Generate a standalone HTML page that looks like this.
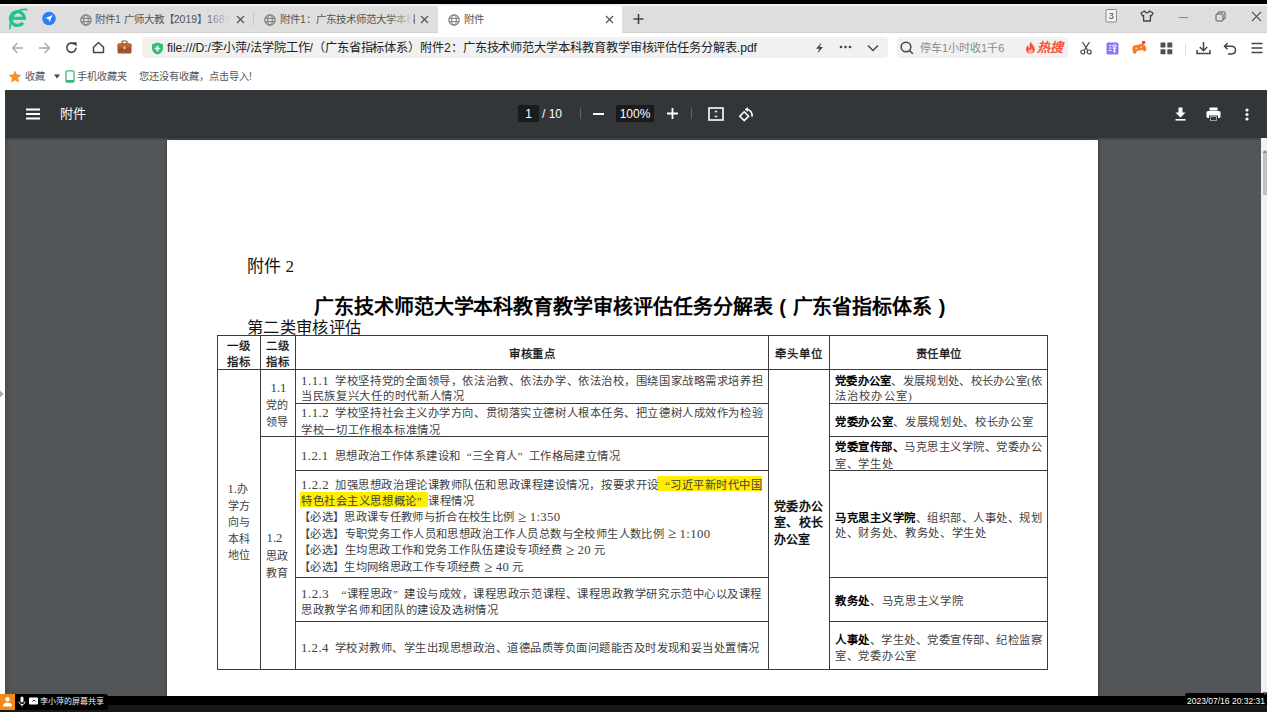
<!DOCTYPE html>
<html lang="zh-CN">
<head>
<meta charset="utf-8">
<style>
*{margin:0;padding:0;box-sizing:border-box}
html,body{width:1267px;height:712px;overflow:hidden;background:#fff;position:relative;font-family:"Liberation Sans",sans-serif}
.a{position:absolute}
.ui{font-family:"Liberation Sans",sans-serif;white-space:nowrap}
.sr{font-family:"Liberation Serif",serif;white-space:nowrap}
.ln{background:#3a3a3a}
.bd{font-family:"Liberation Serif",serif;font-size:11.3px;line-height:16px;color:#404040;white-space:nowrap}
.bd b{color:#000}
.hd{font-family:"Liberation Sans",sans-serif;font-weight:normal;-webkit-text-stroke:0.3px #111;font-size:11.4px;line-height:16px;color:#111;white-space:nowrap}
.hd4{font-family:"Liberation Sans",sans-serif;font-weight:bold;font-size:12px;line-height:16px;color:#111;white-space:nowrap}
.tt{font-family:"Liberation Sans",sans-serif;font-weight:bold;font-size:20px;line-height:24px;color:#000;white-space:nowrap}
.fj{font-family:"Liberation Serif",serif;font-size:17px;line-height:20px;color:#111;white-space:nowrap}
.sub{font-family:"Liberation Sans",sans-serif;font-size:16.3px;line-height:20px;color:#111;white-space:nowrap}
.tab{font-family:"Liberation Sans",sans-serif;font-size:10.5px;line-height:14px;color:#555;white-space:nowrap;overflow:hidden}
.addr{font-family:"Liberation Sans",sans-serif;font-size:12.2px;line-height:16px;color:#222;white-space:nowrap}
.srch{font-family:"Liberation Sans",sans-serif;font-size:11px;line-height:16px;color:#8a8a8a;white-space:nowrap}
.hot{font-family:"Liberation Sans",sans-serif;font-size:13px;line-height:16px;color:#f5553a;font-weight:bold;font-style:italic;white-space:nowrap}
.bm{font-family:"Liberation Sans",sans-serif;font-size:10.2px;line-height:14px;color:#555;white-space:nowrap}
.pt{font-family:"Liberation Sans",sans-serif;font-size:13px;line-height:16px;color:#fff;white-space:nowrap}
.pt2{font-family:"Liberation Sans",sans-serif;font-size:12px;line-height:16px;color:#fff;white-space:nowrap}
.shr{font-family:"Liberation Sans",sans-serif;font-size:8px;line-height:10px;color:#eee;white-space:nowrap}
.ts{font-family:"Liberation Sans",sans-serif;font-size:8.5px;line-height:12px;color:#fff;white-space:nowrap}
.c2{font-size:11px}
.hl{background:#ffee00}
.fw{display:inline-block;width:1em;text-align:center;letter-spacing:0}
.ge{display:inline-block;width:1em;text-align:center;letter-spacing:0;font-size:1.35em;line-height:0;vertical-align:-0.05em}
.lt{font-size:1.13em;line-height:0}
.sp{display:inline-block;width:6px}
.q1{display:inline-block;width:1em;text-align:right;letter-spacing:0}
.q2{display:inline-block;width:1em;text-align:left;letter-spacing:0}
</style>
</head>
<body>
<!-- top black strip -->
<div class="a" style="left:0;top:0;width:1267px;height:4px;background:#000"></div>
<div class="a" style="left:0;top:4px;width:1267px;height:2px;background:#f2f2f2"></div>
<!-- tab bar -->
<div class="a" style="left:0;top:6px;width:1267px;height:26px;background:#dedede"></div>
<div class="a" style="left:0;top:32px;width:1267px;height:1px;background:#d2d2d2"></div>
<!-- active tab -->
<div class="a" style="left:438px;top:6px;width:184px;height:27px;background:#fff"></div>

<!-- address row -->
<div class="a" style="left:0;top:33px;width:1267px;height:55px;background:#fff"></div>
<div class="a" style="left:142px;top:37px;width:746px;height:21px;background:#f1f1f2;border-radius:4px"></div>
<div class="a" style="left:897px;top:37px;width:171px;height:21px;background:#f1f1f2;border-radius:4px"></div>


<!-- logo e -->
<svg class="a" style="left:4px;top:4px" width="26" height="28" viewBox="0 0 26 28">
<path d="M20.35 14.55 A6.9 6.9 0 1 0 18.89 18.80" fill="none" stroke="#20c48c" stroke-width="3.3"/>
<path d="M6.5 14.3 H22" stroke="#20c48c" stroke-width="3.2"/>
<path d="M22.8 5.6 C15 4.6 6.6 9 5.8 24.6" fill="none" stroke="#20c48c" stroke-width="1.7" stroke-linecap="round"/>
</svg>
<!-- blue circle -->
<svg class="a" style="left:42px;top:11px" width="14" height="15" viewBox="0 0 14 15">
<circle cx="7" cy="7.5" r="6.8" fill="#2a7ef0"/>
<path d="M3.2 7.2 L10.6 4 L7.6 11.2 L6.6 8.1 Z" fill="#fff"/>
</svg>
<!-- tab1 -->
<svg class="a gl" style="left:80px;top:14px" width="12" height="12" viewBox="0 0 12 12"><circle cx="6" cy="6" r="5.2" fill="none" stroke="#777" stroke-width="1.1"/><ellipse cx="6" cy="6" rx="2.3" ry="5.2" fill="none" stroke="#777" stroke-width="1"/><path d="M1 4.3H11M1 7.7H11" stroke="#777" stroke-width="1"/></svg>
<div class="a tab" style="left:95px;top:12px;width:135px">附件1 广师大教【2019】168号</div>
<div class="a" style="left:205px;top:8px;width:25px;height:22px;background:linear-gradient(90deg,rgba(222,222,222,0),#dedede)"></div>
<svg class="a" style="left:236px;top:15px" width="9" height="9" viewBox="0 0 9 9"><path d="M1 1L8 8M8 1L1 8" stroke="#555" stroke-width="1.2"/></svg>
<div class="a" style="left:253px;top:13px;width:1px;height:13px;background:#c8c8c8"></div>
<!-- tab2 -->
<svg class="a gl" style="left:264px;top:14px" width="12" height="12" viewBox="0 0 12 12"><circle cx="6" cy="6" r="5.2" fill="none" stroke="#777" stroke-width="1.1"/><ellipse cx="6" cy="6" rx="2.3" ry="5.2" fill="none" stroke="#777" stroke-width="1"/><path d="M1 4.3H11M1 7.7H11" stroke="#777" stroke-width="1"/></svg>
<div class="a tab" style="left:280px;top:12px;width:135px">附件1：广东技术师范大学本科教育</div>
<div class="a" style="left:388px;top:8px;width:25px;height:22px;background:linear-gradient(90deg,rgba(222,222,222,0),#dedede)"></div>
<svg class="a" style="left:420px;top:15px" width="9" height="9" viewBox="0 0 9 9"><path d="M1 1L8 8M8 1L1 8" stroke="#555" stroke-width="1.2"/></svg>
<!-- tab3 active -->
<svg class="a gl" style="left:448px;top:14px" width="12" height="12" viewBox="0 0 12 12"><circle cx="6" cy="6" r="5.2" fill="none" stroke="#777" stroke-width="1.1"/><ellipse cx="6" cy="6" rx="2.3" ry="5.2" fill="none" stroke="#777" stroke-width="1"/><path d="M1 4.3H11M1 7.7H11" stroke="#777" stroke-width="1"/></svg>
<div class="a tab" style="left:464px;top:12px">附件</div>
<svg class="a" style="left:605px;top:15px" width="9" height="9" viewBox="0 0 9 9"><path d="M1 1L8 8M8 1L1 8" stroke="#555" stroke-width="1.2"/></svg>
<svg class="a" style="left:632px;top:13px" width="13" height="12" viewBox="0 0 13 12"><path d="M6.5 1V11M1.5 6H11.5" stroke="#444" stroke-width="1.6"/></svg>
<!-- window controls -->
<svg class="a" style="left:1105px;top:8px" width="13" height="15" viewBox="0 0 13 15"><rect x="1" y="1.5" width="10.5" height="12.5" rx="1" fill="#f2f2f2" stroke="#888" stroke-width="1"/><text x="6.3" y="11.3" font-family="Liberation Sans" font-size="9" text-anchor="middle" fill="#444">3</text></svg>
<svg class="a" style="left:1140px;top:10px" width="14" height="12" viewBox="0 0 14 12"><path d="M4.5 1 L1 3 L2.4 5.8 L3.6 5.3 V11 H10.4 V5.3 L11.6 5.8 L13 3 L9.5 1 C9 2.2 8 2.8 7 2.8 C6 2.8 5 2.2 4.5 1 Z" fill="none" stroke="#444" stroke-width="1.3" stroke-linejoin="round"/></svg>
<div class="a" style="left:1179px;top:17px;width:9px;height:1px;background:#888"></div>
<svg class="a" style="left:1215px;top:11px" width="11" height="11" viewBox="0 0 11 11"><rect x="1" y="3" width="7" height="7" rx="1" fill="none" stroke="#555" stroke-width="1"/><path d="M3 3V1.5C3 1.2 3.2 1 3.5 1H9.5C9.8 1 10 1.2 10 1.5V7.5C10 7.8 9.8 8 9.5 8H8" fill="none" stroke="#555" stroke-width="1"/></svg>
<svg class="a" style="left:1251px;top:11px" width="11" height="11" viewBox="0 0 11 11"><path d="M1 1L10 10M10 1L1 10" stroke="#555" stroke-width="1.1"/></svg>

<!-- nav buttons -->
<svg class="a" style="left:11px;top:42px" width="13" height="12" viewBox="0 0 13 12"><path d="M12 6H1.5M6.5 1L1.5 6L6.5 11" fill="none" stroke="#a8a8a8" stroke-width="1.3"/></svg>
<svg class="a" style="left:38px;top:42px" width="13" height="12" viewBox="0 0 13 12"><path d="M1 6H11.5M6.5 1L11.5 6L6.5 11" fill="none" stroke="#a8a8a8" stroke-width="1.3"/></svg>
<svg class="a" style="left:65px;top:41px" width="13" height="13" viewBox="0 0 13 13"><path d="M11 6.8A4.6 4.6 0 1 1 9.6 3.4" fill="none" stroke="#444" stroke-width="1.6"/><path d="M7.2 1.2H11.6V5.6Z" fill="#444"/></svg>
<svg class="a" style="left:92px;top:41px" width="13" height="13" viewBox="0 0 13 13"><path d="M1.5 6.2L6.5 1.5L11.5 6.2V11.6H1.5Z" fill="none" stroke="#444" stroke-width="1.5" stroke-linejoin="round"/></svg>
<svg class="a" style="left:117px;top:40px" width="15" height="14" viewBox="0 0 15 14"><rect x="5" y="1" width="5" height="3" rx="1" fill="none" stroke="#8b4a22" stroke-width="1.2"/><rect x="0.5" y="3.5" width="14" height="10" rx="1.5" fill="#a0522d"/><rect x="0.5" y="3.5" width="14" height="4" rx="1.5" fill="#b8652f"/><rect x="6.5" y="6.5" width="2" height="2.5" fill="#f2d08a"/></svg>
<!-- address -->
<svg class="a" style="left:151px;top:42px" width="13" height="13" viewBox="0 0 13 13"><path d="M6.5 0.5L12 2.3V6.5C12 9.5 9.8 11.6 6.5 12.6C3.2 11.6 1 9.5 1 6.5V2.3Z" fill="#3cba7a"/><path d="M6.5 3.8V9.2M3.8 6.5H9.2" stroke="#fff" stroke-width="1.6"/></svg>
<div class="a addr j" style="left:167px;top:40px;width:590px">file:///D:/李小萍/法学院工作/（广东省指标体系）附件2：广东技术师范大学本科教育教学审核评估任务分解表.pdf</div>
<svg class="a" style="left:814px;top:42px" width="11" height="12" viewBox="0 0 11 12"><path d="M7.5 0.5L2 6.8H5.3L3.5 11.5L9 5H5.8Z" fill="#444"/></svg>
<svg class="a" style="left:839px;top:45px" width="13" height="4" viewBox="0 0 13 4"><circle cx="2" cy="2" r="1.3" fill="#444"/><circle cx="6.5" cy="2" r="1.3" fill="#444"/><circle cx="11" cy="2" r="1.3" fill="#444"/></svg>
<svg class="a" style="left:867px;top:44px" width="12" height="8" viewBox="0 0 12 8"><path d="M1 1.5L6 6.5L11 1.5" fill="none" stroke="#444" stroke-width="1.4"/></svg>
<!-- search -->
<svg class="a" style="left:900px;top:41px" width="14" height="14" viewBox="0 0 14 14"><circle cx="6" cy="6" r="4.8" fill="none" stroke="#444" stroke-width="1.5"/><path d="M9.5 9.5L12.8 12.8" stroke="#444" stroke-width="1.6"/></svg>
<div class="a srch" style="left:920px;top:40px">停车1小时收1千6</div>
<svg class="a" style="left:1025px;top:41px" width="11" height="13" viewBox="0 0 11 13"><path d="M5.5 0.5C6.5 3 9.5 4.5 9.8 8C10 10.8 8 12.5 5.5 12.5C2.8 12.5 1 10.6 1 8.2C1 6.3 2 5 3 4.3C3 5.8 3.6 6.8 4.5 7.2C4.3 4.8 4.8 2.3 5.5 0.5Z" fill="#f5553a"/><path d="M5.5 12.3C4.2 12.3 3.3 11.3 3.3 10.1C3.3 9 4 8.4 4.6 7.9C4.7 8.8 5.2 9.3 5.8 9.4C5.9 8.6 6.3 7.9 6.9 7.3C7.4 8.3 7.8 9.2 7.7 10.2C7.6 11.4 6.7 12.3 5.5 12.3Z" fill="#fff" opacity="0.6"/></svg>
<div class="a hot" style="left:1037px;top:40px">热搜</div>
<!-- right toolbar icons -->
<svg class="a" style="left:1079px;top:41px" width="14" height="14" viewBox="0 0 14 14"><path d="M3.5 1L8.8 9.5M10.5 1L5.2 9.5" stroke="#444" stroke-width="1.2"/><circle cx="3.8" cy="11" r="2" fill="none" stroke="#444" stroke-width="1.2"/><circle cx="10.2" cy="11" r="2" fill="none" stroke="#444" stroke-width="1.2"/></svg>
<svg class="a" style="left:1106px;top:42px" width="13" height="13" viewBox="0 0 13 13"><rect x="0.5" y="0.5" width="12" height="12" rx="1.5" fill="#8a76f4"/><path d="M3 3.5H5.5M3 6H5.5M3 8.5H5.5M7 3H10V5H7ZM6.8 6.5H10.2M8.5 5V11M7 9H10" stroke="#fff" stroke-width="0.9" fill="none"/></svg>
<svg class="a" style="left:1131px;top:40px" width="16" height="14" viewBox="0 0 16 14"><g transform="rotate(-14 8 8)"><path d="M4 4.5H11C13.2 4.5 14.6 6.5 14.9 9.2C15.1 11.2 14.4 12.6 13.1 12.6C12 12.6 11.3 11.4 10.6 10.5H5.4C4.7 11.4 4 12.6 2.9 12.6C1.6 12.6 0.9 11.2 1.1 9.2C1.4 6.5 2 4.5 4 4.5Z" fill="#fb7a1c"/><circle cx="5.3" cy="7.8" r="0.9" fill="#ffd9b8"/><circle cx="10.4" cy="7.8" r="0.9" fill="#ffd9b8"/></g><circle cx="12.6" cy="2.4" r="1.7" fill="#ea3b2e"/></svg>
<svg class="a" style="left:1160px;top:42px" width="13" height="13" viewBox="0 0 13 13"><rect x="0.5" y="0.5" width="5" height="5" rx="0.6" fill="#505050"/><rect x="7.3" y="0.5" width="5" height="5" rx="0.6" fill="#505050"/><rect x="0.5" y="7.3" width="5" height="5" rx="0.6" fill="#505050"/><rect x="7.3" y="7.3" width="5" height="5" rx="0.6" fill="#505050"/></svg>
<div class="a" style="left:1185px;top:44px;width:1px;height:12px;background:#ddd"></div>
<svg class="a" style="left:1196px;top:41px" width="15" height="14" viewBox="0 0 15 14"><path d="M7.5 1V9.5M3.8 6L7.5 9.7L11.2 6M1 9V12.6H14V9" fill="none" stroke="#444" stroke-width="1.5"/></svg>
<svg class="a" style="left:1223px;top:42px" width="14" height="13" viewBox="0 0 14 13"><path d="M4.5 1.2L1.5 4.2L4.5 7.2M1.8 4.2H8.5C10.8 4.2 12.5 6 12.5 8.1C12.5 10.3 10.8 12 8.5 12H5" fill="none" stroke="#444" stroke-width="1.5"/></svg>
<svg class="a" style="left:1251px;top:42px" width="12" height="12" viewBox="0 0 12 12"><path d="M0.5 1.5H11.5M0.5 6H11.5M0.5 10.5H11.5" stroke="#444" stroke-width="1.5"/></svg>

<!-- bookmarks -->
<svg class="a" style="left:8px;top:70px" width="14" height="13" viewBox="0 0 14 13"><path d="M7 0.5L8.9 4.6L13.4 5L10 8L11 12.5L7 10.2L3 12.5L4 8L0.6 5L5.1 4.6Z" fill="#f7901e"/></svg>
<div class="a bm" style="left:25px;top:70px">收藏</div>
<svg class="a" style="left:54px;top:74px" width="6" height="5" viewBox="0 0 6 5"><path d="M0 0.5H6L3 4.5Z" fill="#444"/></svg>
<svg class="a" style="left:65px;top:70px" width="10" height="13" viewBox="0 0 10 13"><rect x="1" y="0.8" width="8" height="11.4" rx="1.2" fill="none" stroke="#3cb878" stroke-width="1.3"/><rect x="1" y="10" width="8" height="2.2" fill="#3cb878"/></svg>
<div class="a bm" style="left:77px;top:70px">手机收藏夹</div>
<div class="a bm" style="left:139px;top:70px">您还没有收藏，点击导入!</div>

<!-- pdf viewer -->
<div class="a" style="left:5px;top:90px;width:1262px;height:48px;background:#323639"></div>
<div class="a" style="left:5px;top:138px;width:1256px;height:558px;background:#525659"></div>
<div class="a" style="left:1261px;top:138px;width:6px;height:558px;background:#f1f1f1"></div>
<div class="a" style="left:1263px;top:151px;width:4px;height:44px;background:#c1c1c1"></div>

<!-- pdf toolbar -->
<svg class="a" style="left:26px;top:108px" width="14" height="12" viewBox="0 0 14 12"><path d="M0 1.5H14M0 6H14M0 10.5H14" stroke="#fff" stroke-width="1.8"/></svg>
<div class="a pt" style="left:60px;top:106px">附件</div>
<div class="a" style="left:518px;top:105px;width:21px;height:17px;background:#191b1c"></div>
<div class="a pt2" style="left:518px;top:106px;width:21px;text-align:center">1</div>
<div class="a pt2" style="left:542px;top:106px">/ 10</div>
<div class="a" style="left:580px;top:108px;width:1px;height:11px;background:#5f6368"></div>
<div class="a" style="left:593px;top:113px;width:11px;height:2px;background:#fff"></div>
<div class="a" style="left:616px;top:105px;width:38px;height:17px;background:#191b1c"></div>
<div class="a pt2" style="left:616px;top:106px;width:38px;text-align:center">100%</div>
<svg class="a" style="left:667px;top:108px" width="11" height="11" viewBox="0 0 11 11"><path d="M5.5 0V11M0 5.5H11" stroke="#fff" stroke-width="1.8"/></svg>
<div class="a" style="left:691px;top:108px;width:1px;height:11px;background:#5f6368"></div>
<svg class="a" style="left:708px;top:107px" width="16" height="14" viewBox="0 0 16 14"><rect x="1" y="1" width="14" height="12" fill="none" stroke="#fff" stroke-width="1.6"/><path d="M8 3.3L6.2 5.3H9.8ZM8 10.7L6.2 8.7H9.8Z" fill="#fff"/></svg>
<svg class="a" style="left:738px;top:107px" width="16" height="16" viewBox="0 0 16 16"><path d="M6.2 4.8L1.8 9.2L6.2 13.6L10.6 9.2Z" fill="none" stroke="#fff" stroke-width="1.6"/><path d="M8.5 2.3A6 6 0 0 1 14 9.6" fill="none" stroke="#fff" stroke-width="1.6"/><path d="M9.8 0L6.8 2.5L9.8 5Z" fill="#fff"/></svg>
<svg class="a" style="left:1175px;top:107px" width="11" height="14" viewBox="0 0 11 14"><path d="M3.5 0.5H7.5V5.5H10.5L5.5 10.5L0.5 5.5H3.5Z" fill="#fff"/><rect x="0.5" y="12" width="10" height="1.6" fill="#fff"/></svg>
<svg class="a" style="left:1206px;top:107px" width="15" height="15" viewBox="0 0 15 15"><rect x="3.5" y="0.5" width="8" height="3" fill="#fff"/><rect x="0.5" y="4" width="14" height="7" rx="1.5" fill="#fff"/><rect x="3.5" y="9" width="8" height="5" fill="#fff" stroke="#323639" stroke-width="1"/><rect x="4.5" y="10" width="6" height="3" fill="#323639"/></svg>
<svg class="a" style="left:1244px;top:108px" width="6" height="13" viewBox="0 0 6 13"><circle cx="3" cy="2" r="1.6" fill="#fff"/><circle cx="3" cy="6.5" r="1.6" fill="#fff"/><circle cx="3" cy="11" r="1.6" fill="#fff"/></svg>

<!-- page -->
<div class="a" style="left:167px;top:140px;width:931px;height:556px;background:#fff;box-shadow:0 0 3px rgba(0,0,0,0.45)"></div>
<div class="a" style="left:5px;top:138px;width:5px;height:558px;background:linear-gradient(90deg,rgba(40,20,10,0.18),rgba(0,0,0,0))"></div>
<div class="a" style="left:5px;top:138px;width:1256px;height:3px;background:linear-gradient(rgba(0,0,0,0.22),rgba(0,0,0,0))"></div>

<!-- table lines -->

<div class="a ln" style="left:217px;top:335px;width:831px;height:1px"></div>
<div class="a ln" style="left:217px;top:369px;width:831px;height:1px"></div>
<div class="a ln" style="left:217px;top:669px;width:831px;height:1px"></div>
<div class="a ln" style="left:295px;top:403px;width:474px;height:1px"></div>
<div class="a ln" style="left:829px;top:403px;width:219px;height:1px"></div>
<div class="a ln" style="left:295px;top:470px;width:474px;height:1px"></div>
<div class="a ln" style="left:829px;top:470px;width:219px;height:1px"></div>
<div class="a ln" style="left:295px;top:577px;width:474px;height:1px"></div>
<div class="a ln" style="left:829px;top:577px;width:219px;height:1px"></div>
<div class="a ln" style="left:295px;top:621px;width:474px;height:1px"></div>
<div class="a ln" style="left:829px;top:621px;width:219px;height:1px"></div>
<div class="a ln" style="left:260px;top:436px;width:509px;height:1px"></div>
<div class="a ln" style="left:829px;top:436px;width:219px;height:1px"></div>
<div class="a ln" style="left:217px;top:335px;width:1px;height:335px"></div>
<div class="a ln" style="left:260px;top:335px;width:1px;height:335px"></div>
<div class="a ln" style="left:295px;top:335px;width:1px;height:335px"></div>
<div class="a ln" style="left:768px;top:335px;width:1px;height:335px"></div>
<div class="a ln" style="left:829px;top:335px;width:1px;height:335px"></div>
<div class="a ln" style="left:1047px;top:335px;width:1px;height:335px"></div>
<div class="a hl" style="left:657px;top:476px;width:105px;height:15px"></div>
<div class="a hl" style="left:300px;top:492px;width:128px;height:15px"></div>
<div class="a tt j" style="left:314px;top:294.7px;width:638px">广东技术师范大学本科教育教学审核评估任务分解表<span class="fw">(</span>广东省指标体系<span class="fw">)</span></div>
<div class="a fj j" style="left:247px;top:257.4px;width:47px">附件 2</div>
<div class="a sub j" style="left:247px;top:316.75px;width:114px">第二类审核评估</div>
<div class="a hd j" style="left:227px;top:337.5px;width:23px">一级</div>
<div class="a hd j" style="left:227px;top:354.2px;width:23px">指标</div>
<div class="a hd j" style="left:266px;top:337.5px;width:23px">二级</div>
<div class="a hd j" style="left:266px;top:354.2px;width:23px">指标</div>
<div class="a hd j" style="left:509px;top:346.1px;width:46px">审核重点</div>
<div class="a hd j" style="left:775px;top:345.5px;width:47px">牵头单位</div>
<div class="a hd j" style="left:916px;top:345.6px;width:45px">责任单位</div>
<div class="a bd j" style="left:301px;top:372.65px;width:461.5px"><span class="lt">1.1.1</span><span class="sp"></span>学校坚持党的全面领导，依法治教、依法办学、依法治校，围绕国家战略需求培养担</div>
<div class="a bd j" style="left:301px;top:388.1px;width:163px">当民族复兴大任的时代新人情况</div>
<div class="a bd j" style="left:301px;top:404.5px;width:461.5px"><span class="lt">1.1.2</span><span class="sp"></span>学校坚持社会主义办学方向、贯彻落实立德树人根本任务、把立德树人成效作为检验</div>
<div class="a bd j" style="left:301px;top:421.8px;width:139px">学校一切工作根本标准情况</div>
<div class="a bd j" style="left:301px;top:447.55px;width:319.6px"><span class="lt">1.2.1</span><span class="sp"></span>思想政治工作体系建设和<span class="q1">“</span>三全育人<span class="q2">”</span>工作格局建立情况</div>
<div class="a bd j" style="left:301px;top:476.8px;width:461.5px"><span class="lt">1.2.2</span><span class="sp"></span>加强思想政治理论课教师队伍和思政课程建设情况，按要求开设<span class="q1">“</span>习近平新时代中国</div>
<div class="a bd j" style="left:301px;top:493.2px;width:173.3px">特色社会主义思想概论<span class="q2">”</span>课程情况</div>
<div class="a bd j" style="left:299px;top:509.4px;width:261.4px">【必选】思政课专任教师与折合在校生比例<span class="ge">≥</span><span class="lt">1:350</span></div>
<div class="a bd j" style="left:299px;top:525.6px;width:411.6px">【必选】专职党务工作人员和思想政治工作人员总数与全校师生人数比例<span class="ge">≥</span><span class="lt">1:100</span></div>
<div class="a bd j" style="left:299px;top:541.9px;width:306.9px">【必选】生均思政工作和党务工作队伍建设专项经费<span class="ge">≥</span><span class="lt">20</span> 元</div>
<div class="a bd j" style="left:299px;top:558.9px;width:224.8px">【必选】生均网络思政工作专项经费<span class="ge">≥</span><span class="lt">40</span> 元</div>
<div class="a bd j" style="left:301px;top:585.55px;width:461.5px"><span class="lt">1.2.3</span><span class="sp"></span><span class="q1">“</span>课程思政<span class="q2">”</span>建设与成效，课程思政示范课程、课程思政教学研究示范中心以及课程</div>
<div class="a bd j" style="left:301px;top:601.6px;width:196.8px">思政教学名师和团队的建设及选树情况</div>
<div class="a bd j" style="left:301px;top:640.3px;width:458.4px"><span class="lt">1.2.4</span><span class="sp"></span>学校对教师、学生出现思想政治、道德品质等负面问题能否及时发现和妥当处置情况</div>
<div class="a bd j" style="left:835px;top:372.55px;width:207px"><b>党委办公室</b>、发展规划处、校长办公室(依</div>
<div class="a bd j" style="left:835px;top:388.0px;width:76.7px">法治校办公室)</div>
<div class="a bd j" style="left:835px;top:414.05px;width:197.5px"><b>党委办公室</b>、发展规划处、校长办公室</div>
<div class="a bd j" style="left:835px;top:439.0px;width:207px"><b>党委宣传部、</b>马克思主义学院、党委办公</div>
<div class="a bd j" style="left:835px;top:455.8px;width:57.7px">室、学生处</div>
<div class="a bd j" style="left:835px;top:509.6px;width:207px"><b>马克思主义学院</b>、组织部、人事处、规划</div>
<div class="a bd j" style="left:835px;top:525.05px;width:151px">处、财务处、教务处、学生处</div>
<div class="a bd j" style="left:835px;top:593.35px;width:127.6px"><b>教务处</b>、马克思主义学院</div>
<div class="a bd j" style="left:835px;top:632.05px;width:207px"><b>人事处</b>、学生处、党委宣传部、纪检监察</div>
<div class="a bd j" style="left:835px;top:648.1px;width:81.4px">室、党委办公室</div>
<div class="a bd c2" style="left:227.5px;top:480.75px"><span class="lt">1.</span>办</div>
<div class="a bd c2" style="left:227.5px;top:497.5px">学方</div>
<div class="a bd c2" style="left:227.5px;top:514.0px">向与</div>
<div class="a bd c2" style="left:227.5px;top:530.5px">本科</div>
<div class="a bd c2" style="left:227.5px;top:546.7px">地位</div>
<div class="a bd" style="left:270.5px;top:380.1px"><span class="lt">1.1</span></div>
<div class="a bd c2" style="left:266px;top:397.25px">党的</div>
<div class="a bd c2" style="left:266px;top:414.05px">领导</div>
<div class="a bd" style="left:266.5px;top:530.1px"><span class="lt">1.2</span></div>
<div class="a bd c2" style="left:266px;top:547.9px">思政</div>
<div class="a bd c2" style="left:266px;top:564.9px">教育</div>
<div class="a hd4 j" style="left:774px;top:498.95px;width:49px">党委办公</div>
<div class="a hd4 j" style="left:774px;top:515.3px;width:49px">室、校长</div>
<div class="a hd4 j" style="left:774px;top:531.5px;width:36px">办公室</div>
<!-- bottom bar -->
<div class="a" style="left:0;top:696px;width:1267px;height:8.5px;background:#000"></div>
<div class="a" style="left:0;top:704.5px;width:1267px;height:8px;background:#171717"></div>
<div class="a" style="left:0;top:694px;width:108px;height:15.5px;background:#000;border-top-right-radius:3px"></div>
<div class="a" style="left:0;top:694px;width:15px;height:15.5px;background:#f28a1c"></div>
<svg class="a" style="left:2px;top:696px" width="11" height="11" viewBox="0 0 11 11"><circle cx="5.5" cy="3.3" r="2.2" fill="#fff"/><path d="M1 10.5C1 7.5 3 6.4 5.5 6.4C8 6.4 10 7.5 10 10.5Z" fill="#fff"/></svg>
<svg class="a" style="left:18px;top:696px" width="8" height="11" viewBox="0 0 8 11"><rect x="2.5" y="0.5" width="3" height="6" rx="1.5" fill="#fff"/><path d="M1 5.5C1 7.5 2.3 8.5 4 8.5C5.7 8.5 7 7.5 7 5.5M4 8.5V10.5" fill="none" stroke="#fff" stroke-width="1"/></svg>
<svg class="a" style="left:29px;top:697px" width="9" height="8" viewBox="0 0 9 8"><rect x="0" y="0.5" width="9" height="7" rx="1" fill="#fff"/><path d="M3.5 4.5L5 3L6.5 4.5" stroke="#000" stroke-width="0.8" fill="none"/></svg>
<div class="a shr" style="left:40px;top:697px">李小萍的屏幕共享</div>
<div class="a" style="left:1185px;top:693px;width:82px;height:11.5px;background:#000;border-top-left-radius:3px"></div>
<div class="a ts" style="left:1187px;top:695px">2023/07/16 20:32:31</div>
<!-- left white strip arrow -->
<svg class="a" style="left:0;top:390px" width="4" height="8" viewBox="0 0 4 8"><path d="M0 0.5L3.5 4L0 7.5Z" fill="#aaa"/></svg>
<div class="a" style="left:1261px;top:141px;width:6px;height:8px"><svg width="6" height="8" viewBox="0 0 6 8"><path d="M1.5 6L4 3L6 6Z" fill="#888"/></svg></div>
<div class="a" style="left:1261px;top:684px;width:6px;height:8px"><svg width="6" height="8" viewBox="0 0 6 8"><path d="M1.5 2L4 5L6 2Z" fill="#666"/></svg></div>

<script>
(function(){var els=document.querySelectorAll('.j');for(var i=0;i<els.length;i++){var e=els[i];var W=parseFloat(e.style.width);e.style.width='auto';e.style.letterSpacing='0px';var nat=e.getBoundingClientRect().width;var n=Array.from(e.textContent).length;if(n<2)continue;var ls=(W-nat)/(n-1);e.style.letterSpacing=ls+'px';e.style.width='auto';}})();
</script>
</body>
</html>
